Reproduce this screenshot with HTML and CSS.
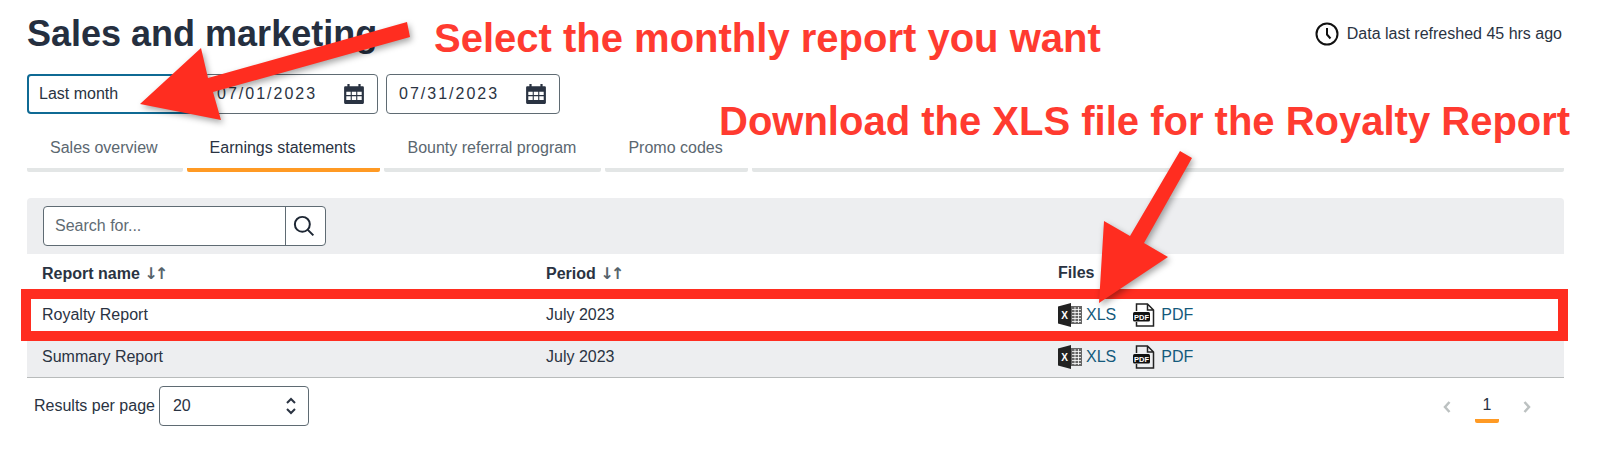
FILE: index.html
```html
<!DOCTYPE html>
<html lang="en">
<head>
    <meta charset="UTF-8">
    <title>Sales and marketing</title>
    <link rel="stylesheet" href="styles.css">
</head>
<body>

<div class="page">
    <div class="top-row">
        <h1>Sales and marketing</h1>
        <div class="refreshed">
            <svg class="clock" viewBox="0 0 24 24"><circle cx="12" cy="12" r="10.5"/><path d="M12 6v6.5l3.5 4"/></svg>
            <span>Data last refreshed 45 hrs ago</span>
        </div>
    </div>

    <div class="filters">
        <div class="field field-range">Last month</div>
        <div class="field field-date">
            <span>07/01/2023</span>
            <svg class="calendar" viewBox="0 0 20 20"><use href="#cal"/></svg>
        </div>
        <div class="field field-date">
            <span>07/31/2023</span>
            <svg class="calendar" viewBox="0 0 20 20"><use href="#cal"/></svg>
        </div>
    </div>

    <div class="tabs">
        <div class="tab">Sales overview</div>
        <div class="tab active">Earnings statements</div>
        <div class="tab">Bounty referral program</div>
        <div class="tab">Promo codes</div>
        <div class="tab tab-rest"></div>
    </div>

    <div class="search-bar">
        <div class="search">
            <div class="search-input">Search for...</div>
            <div class="search-btn">
                <svg viewBox="0 0 20 20"><circle cx="8.500" cy="8.500" r="6.800"/><path d="M13.500 13.500l5 5"/></svg>
            </div>
        </div>
    </div>

    <div class="row head">
        <div>Report name <span class="sort">↓↑</span></div>
        <div>Period <span class="sort">↓↑</span></div>
        <div>Files</div>
    </div>
    <div class="row row-first">
        <div>Royalty Report</div>
        <div>July 2023</div>
        <div class="files">
            <svg class="icon-xls" viewBox="0 0 24 24">
                <path class="xls-cover" d="M0 3.500L13 0v24L0 20.500z"/>
                <text x="6.500" y="15.500" text-anchor="middle" class="icon-text xls-x">X</text>
                <path class="xls-sheet" d="M13 3h11v18H13z"/>
                <path class="xls-grid" d="M14 6.500h9M14 9.500h9M14 12.500h9M14 15.500h9M14 18.500h9M17 4v16M20.500 4v16"/>
            </svg><a>XLS</a>
            <svg class="icon-pdf" viewBox="0 0 22 24">
                <path class="pdf-page" d="M3.500 8V1h11l6 6v16h-17v-4M14.500 1v6h6"/>
                <rect class="pdf-band" x="0" y="9" width="17" height="9.500" rx="1.500"/>
                <text x="8.500" y="16.500" text-anchor="middle" class="icon-text pdf-label">PDF</text>
            </svg><a>PDF</a>
        </div>
    </div>
    <div class="row shaded">
        <div>Summary Report</div>
        <div>July 2023</div>
        <div class="files">
            <svg class="icon-xls" viewBox="0 0 24 24">
                <path class="xls-cover" d="M0 3.500L13 0v24L0 20.500z"/>
                <text x="6.500" y="15.500" text-anchor="middle" class="icon-text xls-x">X</text>
                <path class="xls-sheet" d="M13 3h11v18H13z"/>
                <path class="xls-grid" d="M14 6.500h9M14 9.500h9M14 12.500h9M14 15.500h9M14 18.500h9M17 4v16M20.500 4v16"/>
            </svg><a>XLS</a>
            <svg class="icon-pdf" viewBox="0 0 22 24">
                <path class="pdf-page" d="M3.500 8V1h11l6 6v16h-17v-4M14.500 1v6h6"/>
                <rect class="pdf-band" x="0" y="9" width="17" height="9.500" rx="1.500"/>
                <text x="8.500" y="16.500" text-anchor="middle" class="icon-text pdf-label">PDF</text>
            </svg><a>PDF</a>
        </div>
    </div>

    <div class="table-footer">
        <div class="per-page">
            <span>Results per page</span>
            <div class="per-page-select">
                <span>20</span>
                <svg viewBox="0 0 12 22"><path d="M2 8l4-4 4 4M2 14l4 4 4-4"/></svg>
            </div>
        </div>
        <div class="pager">
            <svg viewBox="0 0 10 14"><path d="M7.500 2L3 7l4.500 5"/></svg>
            <span class="page-num">1</span>
            <svg viewBox="0 0 10 14"><path d="M2.500 2L7 7l-4.500 5"/></svg>
        </div>
    </div>
</div>

<!-- annotations drawn over the screenshot -->
<div class="note note-one">Select the monthly report you want</div>
<div class="note note-two">Download the XLS file for the Royalty Report</div>
<div class="highlight"></div>
<svg class="arrows" viewBox="0 0 1604 454">
    <polygon points="407,22 410,37 213,92 221,120 140,104 201,48 208,78"/>
    <polygon points="1180,151 1192,158 1144,243 1168,257 1099,303 1104,221 1130,236"/>
</svg>

<svg class="defs" width="0" height="0">
    <symbol id="cal" viewBox="0 0 20 20">
        <path fill="#2a3342" d="M4 1h2v2h8V1h2v2h2a1 1 0 0 1 1 1v14a1 1 0 0 1-1 1H2a1 1 0 0 1-1-1V4a1 1 0 0 1 1-1h2z"/>
        <path fill="#fff" d="M3 8h4v3H3zM8 8h4v3H8zM13 8h4v3h-4zM3 12h4v3.500H3zM8 12h4v3.500H8zM13 12h4v3.500h-4z"/>
    </symbol>
</svg>

</body>
</html>
```

FILE: styles.css
```css
body {
    margin: 0;
    font-family: "Liberation Sans", Arial, sans-serif;
    font-size: 16px;
    color: #2a3342;
    background-color: #fff;
    width: 1604px;
    height: 454px;
    overflow: hidden;
    position: relative;
}

.page {
    padding: 0 40px 0 27px;
}

.top-row {
    display: flex;
    justify-content: space-between;
    align-items: center;
    height: 66px;
    padding-top: 2px;
    box-sizing: border-box;
}

h1 {
    margin: 0;
    font-size: 36px;
    font-weight: bold;
    color: #252f3f;
}

.refreshed {
    display: flex;
    align-items: center;
    gap: 8px;
    font-size: 16px;
    margin-right: 2px;
}

.clock {
    width: 24px;
    height: 24px;
    fill: none;
    stroke: #111;
    stroke-width: 2;
}

.filters {
    margin-top: 8px;
    display: flex;
    gap: 8px;
}

.field {
    box-sizing: border-box;
    height: 40px;
    border: 1px solid #5f6b73;
    border-radius: 4px;
    display: flex;
    align-items: center;
    justify-content: space-between;
    padding: 0 12px 0 12px;
}

.field-range {
    width: 169px;
    border: 2px solid #0f6a94;
    padding-left: 10px;
}

.field-date {
    width: 174px;
    letter-spacing: 2px;
}

.calendar {
    width: 22px;
    height: 22px;
}

.tabs {
    margin-top: 20px;
    display: flex;
    gap: 4px;
}

.tab {
    padding: 0 25px 0 23px;
    height: 38px;
    line-height: 28px;
    box-sizing: border-box;
    color: #5b6770;
    border-bottom: 4px solid #e3e6e6;
    border-radius: 0 0 2px 2px;
}

.tab.active {
    color: #2a3342;
    border-bottom-color: #ff9a24;
}

.tab-rest {
    flex: 1;
}

.search-bar {
    margin-top: 26px;
    height: 56px;
    background-color: #edeef0;
    border-radius: 4px 4px 0 0;
    padding: 8px 16px;
    box-sizing: border-box;
}

.search {
    box-sizing: border-box;
    width: 283px;
    height: 40px;
    display: flex;
    background-color: #fff;
    border: 1px solid #5f6b73;
    border-radius: 4px;
}

.search-input {
    flex: 1;
    padding-left: 11px;
    line-height: 38px;
    color: #5f6b73;
    border-right: 1px solid #5f6b73;
}

.search-btn {
    width: 39px;
    display: flex;
    align-items: center;
    justify-content: center;
}

.search-btn svg {
    width: 22px;
    height: 22px;
    margin-right: 3px;
    fill: none;
    stroke: #1d2633;
    stroke-width: 1.800;
}

.row {
    display: grid;
    grid-template-columns: 504px 512px 1fr;
    padding-left: 15px;
    align-items: center;
}

.head {
    height: 38px;
    font-weight: bold;
}

.sort {
    color: #55636b;
    letter-spacing: -3px;
    font-family: "DejaVu Sans", sans-serif;
}

.row-first {
    height: 46px;
}

.row.shaded {
    height: 40px;
    background-color: #edeef0;
    border-bottom: 1px solid #b8bbbb;
    box-sizing: border-box;
    padding-bottom: 1px;
}

.files {
    display: flex;
    align-items: center;
}

.files a {
    color: #145a7c;
}

.icon-xls {
    width: 24px;
    height: 24px;
    margin-right: 4px;
}

.icon-pdf {
    width: 22px;
    height: 24px;
    margin: 0 6px 0 17px;
}

.icon-text {
    font-family: "Liberation Sans", sans-serif;
    font-weight: bold;
}

.xls-cover {
    fill: #222;
}

.xls-x {
    font-size: 10px;
    fill: #fff;
}

.xls-sheet {
    fill: #666;
}

.xls-grid {
    fill: none;
    stroke: #fff;
    stroke-width: 0.800;
}

.pdf-page {
    fill: none;
    stroke: #222;
    stroke-width: 1.500;
}

.pdf-band {
    fill: #111;
}

.pdf-label {
    font-size: 7.500px;
    fill: #fff;
}

.table-footer {
    margin-top: 8px;
    display: flex;
    justify-content: space-between;
    align-items: center;
}

.per-page {
    display: flex;
    align-items: center;
    gap: 4px;
    padding-left: 7px;
}

.per-page-select {
    box-sizing: border-box;
    width: 150px;
    height: 40px;
    border: 1px solid #5f6b73;
    border-radius: 4px;
    display: flex;
    align-items: center;
    justify-content: space-between;
    padding: 0 11px 0 13px;
}

.per-page-select svg {
    width: 12px;
    height: 22px;
    fill: none;
    stroke: #2a3342;
    stroke-width: 2;
}

.pager {
    display: flex;
    align-items: flex-start;
    height: 40px;
    padding-right: 32px;
}

.pager svg {
    width: 10px;
    height: 14px;
    margin-top: 14px;
    fill: none;
    stroke: #bcc1c1;
    stroke-width: 2.500;
}

.page-num {
    width: 24px;
    height: 37px;
    margin: 0 23px;
    padding-top: 10px;
    box-sizing: border-box;
    text-align: center;
    border-bottom: 4px solid #ff9a24;
    border-radius: 2px;
}

.note {
    position: absolute;
    color: #ff3b30;
    font-weight: bold;
    white-space: nowrap;
    font-size: 40px;
}

.note-one {
    left: 434px;
    top: 16px;
}

.note-two {
    left: 719px;
    top: 99px;
}

.highlight {
    position: absolute;
    left: 21px;
    top: 289px;
    width: 1547px;
    height: 52px;
    box-sizing: border-box;
    border: 10px solid #ff2d20;
}

.arrows {
    position: absolute;
    left: 0;
    top: 0;
    width: 1604px;
    height: 454px;
    fill: #ff2d20;
    filter: drop-shadow(2px 3px 3px rgba(0, 0, 0, 0.35));
}

.defs {
    position: absolute;
}
```
